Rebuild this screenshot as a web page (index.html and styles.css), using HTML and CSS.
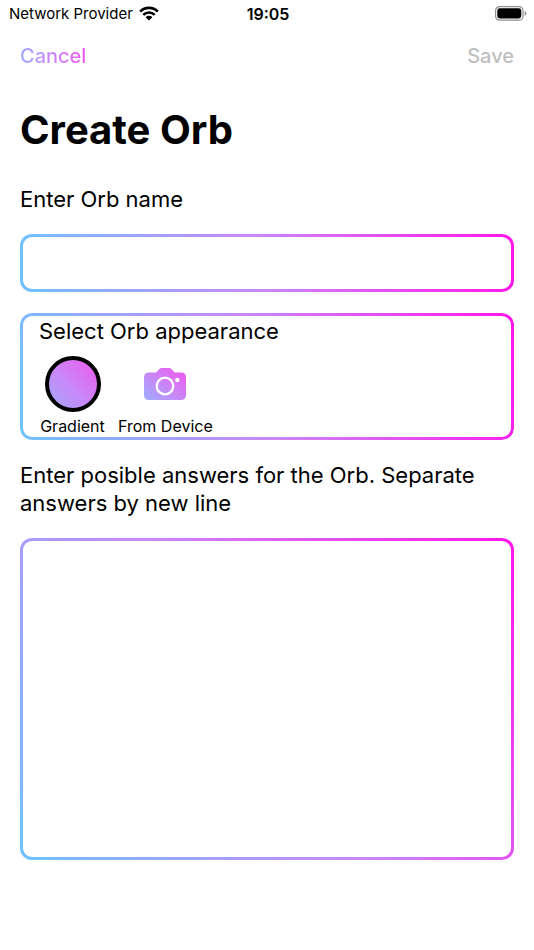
FILE: index.html
```
<!DOCTYPE html>
<html lang="en">
<head>
    <meta charset="UTF-8">
    <meta name="viewport" content="width=device-width, initial-scale=1.0">
    <title>Create Orb</title>
    <link rel="stylesheet" href="styles.css">
</head>
<body>

<!-- Status Bar -->
<div class="status-bar">
    <div class="carrier">
        <span>Network Provider</span>
        <svg class="wifi" viewBox="0 0 20 15" width="20" height="15">
            <path d="M1.2 5.6A12.4 12.4 0 0 1 18.8 5.6M4.3 8.9A8 8 0 0 1 15.7 8.9" fill="none" stroke="#000" stroke-width="2.7"/>
            <path d="M10 14.6L6.6 11.2A4.8 4.8 0 0 1 13.4 11.2Z" fill="#000"/>
        </svg>
    </div>
    <span class="time">19:05</span>
    <svg class="battery" viewBox="0 0 32 15" width="32" height="15">
        <rect x="0.6" y="0.6" width="27.4" height="13.6" rx="4" fill="none" stroke="#8e8e8e" stroke-width="1.2"/>
        <rect x="2.3" y="2.3" width="24" height="10.2" rx="2.4" fill="#000"/>
        <path d="M29.6 5Q31.4 5.6 31.4 7.4Q31.4 9.2 29.6 9.8Z" fill="#8e8e8e"/>
    </svg>
</div>

<!-- Navigation -->
<div class="nav">
    <button class="nav-button cancel" type="button">Cancel</button>
    <button class="nav-button save" type="submit" form="orbForm" disabled>Save</button>
</div>

<form class="orb-form" id="orbForm">
    <h1 class="title">Create Orb</h1>

    <label class="label" for="orbName">Enter Orb name</label>
    <input class="field name-input" type="text" id="orbName">

    <!-- Appearance Section -->
    <fieldset class="field appearance">
        <div class="appearance-title" id="appearanceTitle">Select Orb appearance</div>
        <div class="options" role="radiogroup" aria-labelledby="appearanceTitle">
            <label class="option">
                <input class="orb" type="radio" name="appearance" value="gradient" checked>
                <span>Gradient</span>
            </label>
            <label class="option">
                <input class="hidden-radio" type="radio" name="appearance" value="device">
                <svg class="camera" viewBox="0 0 42 32" width="42" height="56">
                    <defs>
                        <linearGradient id="cameraFill" x1="0" y1="1" x2="1" y2="0">
                            <stop offset="0" stop-color="#9caeff"/>
                            <stop offset="0.5" stop-color="#cc84f6"/>
                            <stop offset="1" stop-color="#f352ee"/>
                        </linearGradient>
                    </defs>
                    <path d="M5 4.5H10.5C12 4.5 12.6 4 13.5 3L15 1.4C16 .4 16.8 0 18.2 0H24.6C26 0 26.8.4 27.8 1.4L29.3 3C30.2 4 30.8 4.5 32.3 4.5H37C40.2 4.5 42 6.2 42 9.4V27.2C42 30.4 40.2 32 37 32H5C1.8 32 0 30.4 0 27.2V9.4C0 6.2 1.8 4.5 5 4.5Z" fill="url(#cameraFill)"/>
                    <circle cx="21" cy="18" r="8.3" fill="none" stroke="#fff" stroke-width="2.3"/>
                    <circle cx="33.3" cy="12" r="2.2" fill="#fff"/>
                </svg>
                <span>From Device</span>
            </label>
        </div>
    </fieldset>

    <label class="label" for="answers">Enter posible answers for the Orb. Separate answers by new line</label>
    <textarea class="field answers" id="answers"></textarea>
</form>

</body>
</html>
```

FILE: styles.css
```
* {
    box-sizing: border-box;
}
body {
    margin: 0;
    min-height: 100vh;
    background-color: #ffffff;
    color: #000000;
    font-family: Inter, "Liberation Sans", sans-serif;
}
/* Status bar */
.status-bar {
    display: grid;
    grid-template-columns: 1fr auto 1fr;
    align-items: center;
    height: 27px;
    padding: 0 7px 0 9px;
    font-size: 16px;
}
.carrier {
    display: flex;
    align-items: center;
    gap: 6px;
    font-size: 15px;
}
.time {
    font-weight: 600;
}
.battery {
    justify-self: end;
}
/* Navigation */
.nav {
    display: flex;
    justify-content: space-between;
    align-items: center;
    height: 57px;
    padding: 0 20px;
}
.nav-button {
    padding: 0;
    border: none;
    background: none;
    font-family: inherit;
    font-size: 20px;
    font-weight: 500;
    line-height: 28px;
    cursor: pointer;
}
.cancel {
    background: linear-gradient(72deg, #9caeff, #cc84f6, #f352ee);
    -webkit-background-clip: text;
    background-clip: text;
    color: transparent;
}
.save {
    color: #bfbfbf;
    cursor: default;
}
/* Form */
.orb-form {
    display: flex;
    flex-direction: column;
    padding: 20px;
}
.title {
    margin: 0 0 29px;
    font-size: 40px;
    font-weight: 700;
    line-height: 52px;
}
.label {
    margin-bottom: 21px;
    font-size: 22px;
    line-height: 28px;
}
.field {
    --angle: 83deg;
    width: 100%;
    margin: 0 0 21px;
    border: 3px solid transparent;
    border-radius: 12px;
    background: linear-gradient(#ffffff, #ffffff) padding-box,
                linear-gradient(var(--angle), #6ec2ff, #cc84f6, #ff14ec) border-box;
    font-family: inherit;
    outline: none;
}
.name-input {
    height: 58px;
    padding: 0 16px;
    font-size: 22px;
}
/* Appearance picker */
.appearance {
    --angle: 75deg;
    min-width: 0;
    padding: 1px 16px;
}
.appearance-title {
    font-size: 22px;
    line-height: 28px;
}
.options {
    display: flex;
    gap: 12px;
    padding-top: 11px;
}
.option {
    display: flex;
    flex-direction: column;
    align-items: center;
    gap: 4px;
    min-width: 67px;
    font-size: 16px;
    line-height: 20px;
    cursor: pointer;
}
.orb {
    appearance: none;
    width: 56px;
    height: 56px;
    margin: 0;
    border-radius: 50%;
    background: linear-gradient(45deg, #9caeff, #cc84f6, #f352ee);
}
.orb:checked {
    border: 4px solid #000000;
    background-origin: border-box;
}
.hidden-radio {
    position: absolute;
    opacity: 0;
}
/* Answers */
.answers {
    --angle: 57deg;
    display: block;
    height: 322px;
    padding: 12px 16px;
    font-size: 22px;
    resize: none;
}
```
